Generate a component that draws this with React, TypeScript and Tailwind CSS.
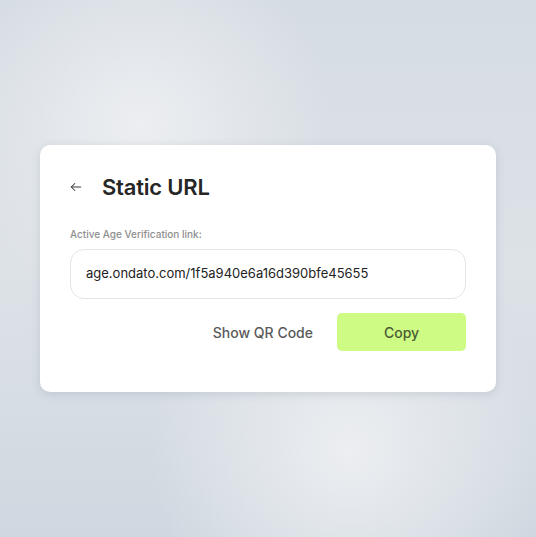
import React from "react";

export default function App() {
  return (
    <div
      className="w-[536px] h-[537px] flex items-center justify-center"
      style={{
        fontFamily: "Inter, 'Liberation Sans', sans-serif",
        background:
          "radial-gradient(circle at 140px 125px, #eceef1 0px, rgba(236,238,241,0) 190px), radial-gradient(circle at 350px 450px, #eceef1 0px, rgba(236,238,241,0) 200px), linear-gradient(180deg, #d5dce3 0%, #dde2e7 50%, #cfd8e0 100%)",
      }}
    >
      <div className="w-[456px] h-[247px] bg-white rounded-[10px] shadow-[0_2px_10px_rgba(80,100,120,0.18)] pt-[28px] px-[30px] flex flex-col">
        <div className="flex items-center h-[28px]">
          <svg width="14" height="14" viewBox="0 0 24 24" fill="none" stroke="#3a3a3a" strokeWidth="1.8" strokeLinecap="round" strokeLinejoin="round" className="ml-[-1px]">
            <path d="M20 12H4" />
            <path d="M10 6l-6 6 6 6" />
          </svg>
          <span className="ml-[19px] text-[22px] font-semibold text-[#262626] tracking-[-0.2px]">Static URL</span>
        </div>
        <div className="mt-[27px] text-[10px] font-medium text-[#8e8e8e] leading-[12px]">Active Age Verification link:</div>
        <div className="mt-[9px] h-[50px] border border-[#e2e4e8] rounded-[14px] flex items-center pl-[15px] text-[13px] text-[#232323]">
          age.ondato.com/1f5a940e6a16d390bfe45655
        </div>
        <div className="mt-[14px] flex items-center justify-end">
          <div className="text-[14px] font-medium text-[#5a5a5a] mr-[24px]">Show QR Code</div>
          <div className="w-[129px] h-[38px] rounded-[5px] bg-[#cdfb83] flex items-center justify-center text-[14px] font-medium text-[#4b5a34]">Copy</div>
        </div>
      </div>
    </div>
  );
}
